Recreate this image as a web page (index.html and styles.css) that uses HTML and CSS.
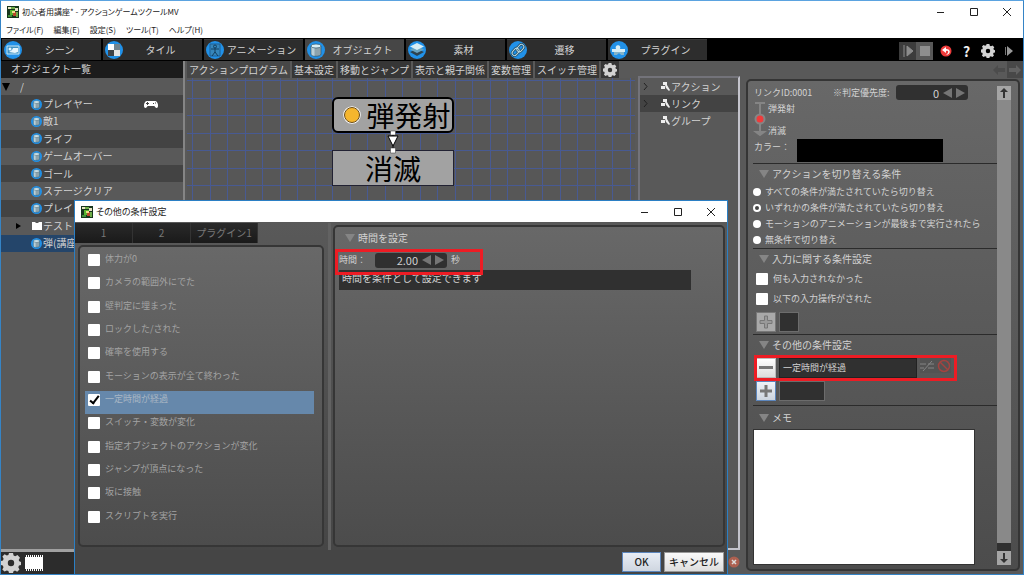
FILE: index.html
```html
<!DOCTYPE html>
<html lang="ja">
<head>
    <meta charset="UTF-8">
    <meta name="viewport" content="width=device-width, initial-scale=1.0">
    <title>初心者用講座* - アクションゲームツクールMV</title>
    <link rel="stylesheet" href="styles.css">
</head>
<body>
    <svg class="defs" aria-hidden="true">
        <symbol id="i-app" viewBox="0 0 12 12">
            <rect width="12" height="12" fill="#17351c"/>
            <path d="M1 1h3v2H1zM8 2h3v3H8z" fill="#e8e3c4"/>
            <path d="M3 4h5v5H3z" fill="#57b52f"/>
            <path d="M6 6h4v4H6z" fill="#b9482a"/>
            <path d="M5 5h3v2H5z" fill="#f0dc8a"/>
            <path d="M1 9h4v2H1z" fill="#3f8f3a"/>
            <path d="M4 1h4v2H4zM9 6h2v5H9z" fill="#6fae4a"/>
        </symbol>
        <symbol id="i-object" viewBox="0 0 18 18">
            <circle cx="9" cy="9" r="9" fill="#2191e8"/>
            <path d="M4 5v8c0 3 10 3 10 0V5z" fill="#8ca3ad" stroke="#35586a" stroke-width=".7"/>
            <path d="M4.500 5.500v7.500c0 1 1 1.500 3 2V6z" fill="#b9d0d9"/>
            <ellipse cx="9" cy="5" rx="5" ry="2" fill="#d8eef5" stroke="#35586a" stroke-width=".7"/>
        </symbol>
        <symbol id="i-gear" viewBox="0 0 20 20">
            <path fill-rule="evenodd" d="M8 0h4l.6 2.6 1.6.7L16.500 2l2.500 2.700-1.300 2.200.6 1.400L20 9v3l-2 .6-.7 1.600 1.200 2.300-2.300 2.200-2.200-1.200-1.500.7L12 20H8l-.6-2-1.600-.6-2.300 1.200-2.200-2.200 1.200-2.200-.7-1.600L0 12V8l2-.6.6-1.600L1.400 3.500l2.200-2.200 2.200 1.200 1.600-.6zM10 6.800a3.200 3.200 0 1 0 0 6.400 3.200 3.200 0 0 0 0-6.400z" fill="currentColor"/>
        </symbol>
        <symbol id="i-min" viewBox="0 0 8 8"><path d="M0 4.500h7" stroke="#222" fill="none"/></symbol>
        <symbol id="i-max" viewBox="0 0 8 8"><path d="M.5.5h7v7h-7z" stroke="#222" fill="none"/></symbol>
        <symbol id="i-close" viewBox="0 0 8 8"><path d="M0 0l8 8M8 0L0 8" stroke="#222" fill="none"/></symbol>
        <symbol id="i-left" viewBox="0 0 9 10"><path d="M9 0v10L0 5z" fill="#757575"/></symbol>
        <symbol id="i-right" viewBox="0 0 9 10"><path d="M0 0v10l9-5z" fill="#757575"/></symbol>
        <symbol id="i-node" viewBox="0 0 9 9">
            <path d="M2 0h4v3H2zM0 4h4v3H0zM4 3h2l3 5-1 1-3-3z" fill="#eee"/>
        </symbol>
    </svg>

    <div class="window">
        <header class="titlebar">
            <svg class="app-icon"><use href="#i-app"/></svg>
            <h1 class="title">初心者用講座* - アクションゲームツクールMV</h1>
            <div class="window-buttons">
                <button aria-label="最小化"><svg><use href="#i-min"/></svg></button>
                <button aria-label="最大化"><svg><use href="#i-max"/></svg></button>
                <button aria-label="閉じる"><svg><use href="#i-close"/></svg></button>
            </div>
        </header>

        <nav class="menubar">
            <button>ファイル(F)</button>
            <button>編集(E)</button>
            <button>設定(S)</button>
            <button>ツール(T)</button>
            <button>ヘルプ(H)</button>
        </nav>

        <div class="toolbar">
            <button class="mode">
                <svg viewBox="0 0 18 18"><circle cx="9" cy="9" r="9" fill="#2191e8"/><path d="M3 5h12v8H3z" fill="#3f92c4" stroke="#c8e6f5"/><circle cx="6" cy="8" r="1.500" fill="#e6f5fc"/><path d="M5 11l3-2 1-2h5v4l-3 1z" fill="#e6f5fc"/></svg>
                <span>シーン</span>
            </button>
            <button class="mode">
                <svg viewBox="0 0 18 18"><circle cx="9" cy="9" r="9" fill="#2191e8"/><path d="M3 3h6v6H3z" fill="#fff"/><path d="M9 3h6v6H9z" fill="#72848f"/><path d="M3 9h6v6H3z" fill="#3d4247"/><path d="M9 9h6v6H9z" fill="#e4e4e4"/></svg>
                <span>タイル</span>
            </button>
            <button class="mode">
                <svg viewBox="0 0 18 18"><circle cx="9" cy="9" r="9" fill="#2191e8"/><path d="M4 3h10v12H4z" fill="#3686bb" stroke="#1d5f94"/><circle cx="9" cy="5.500" r="1.500" fill="none" stroke="#123e5f"/><path d="M5 8h8M9 7v4M9 11l-3 4M9 11l3 4" stroke="#123e5f" fill="none"/></svg>
                <span>アニメーション</span>
            </button>
            <button class="mode active">
                <svg><use href="#i-object"/></svg>
                <span>オブジェクト</span>
            </button>
            <button class="mode">
                <svg viewBox="0 0 18 18"><circle cx="9" cy="9" r="9" fill="#2191e8"/><path d="M9 8l7 3-7 4-7-4z" fill="#2d4350"/><path d="M9 5l7 3.500L9 12 2 8.500z" fill="#6ba4bf"/><path d="M9 2l7 3.500L9 9 2 5.500z" fill="#d7edf5"/></svg>
                <span>素材</span>
            </button>
            <button class="mode">
                <svg viewBox="0 0 18 18"><circle cx="9" cy="9" r="9" fill="#2191e8"/><g fill="none" transform="rotate(-48 9 9)"><rect x="2" y="6" width="8" height="5" rx="2.500" stroke="#21485d" stroke-width="2.500"/><rect x="8" y="7" width="8" height="5" rx="2.500" stroke="#21485d" stroke-width="2.500"/><rect x="2" y="6" width="8" height="5" rx="2.500" stroke="#b5d8e5"/><rect x="8" y="7" width="8" height="5" rx="2.500" stroke="#b5d8e5"/></g></svg>
                <span>遷移</span>
            </button>
            <button class="mode">
                <svg viewBox="0 0 18 18"><circle cx="9" cy="9" r="9" fill="#2191e8"/><path d="M2 8h4c-2-5 6-5 4 0h5v3h-1v3h-3c0-3-4-3-4 0H4v-3H2z" fill="#d7edf5"/><path d="M4 11h10v3h-3c0-2-4-2-4 0H4z" fill="#84b4ca"/></svg>
                <span>プラグイン</span>
            </button>
            <div class="tools">
                <button class="tool lit" aria-label="テストプレイ"><svg viewBox="0 0 18 18"><path d="M5 3v12M8 4v10l6-5z" fill="#8b8b8b" stroke="#8b8b8b"/></svg></button>
                <button class="tool lit stop" aria-label="停止"><svg viewBox="0 0 18 18"><path d="M4 4h10v10H4z" fill="#8e8e8e"/></svg></button>
                <button class="tool" aria-label="元に戻す"><svg viewBox="0 0 18 18"><circle cx="9" cy="9" r="5.500" fill="#ee3b3b"/><path d="M9 5L5 8l4 3V9c3-1 3 2 0 4 5-1 5-6 0-6z" fill="#fff"/></svg></button>
                <button class="tool help" aria-label="ヘルプ">?</button>
                <button class="tool gear" aria-label="設定"><svg><use href="#i-gear"/></svg></button>
                <button class="tool" aria-label="再生"><svg viewBox="0 0 18 18"><path d="M5.500 5v8" stroke="#777"/><path d="M7 4v10l6-5z" fill="#999"/></svg></button>
            </div>
        </div>

        <main class="workspace">
            <aside class="sidebar">
                <h2 class="sidebar-title">オブジェクト一覧</h2>
                <ul class="objects">
                    <li class="root"><svg class="fold" viewBox="0 0 8 8"><path d="M0 0h8L4 8z"/></svg>/</li>
                    <li><svg class="obj"><use href="#i-object"/></svg>プレイヤー
                        <svg class="pad" viewBox="0 0 14 8"><path d="M3 1h8c3 0 4 6 2 7-2 0-2-2-3-2H4C3 6 3 8 1 8-1 7 0 1 3 1z" fill="#fff"/><path d="M2 3.500h3M3.500 2v3M9 3.500h1M11 3h1" stroke="#444"/></svg></li>
                    <li><svg class="obj"><use href="#i-object"/></svg>敵1</li>
                    <li><svg class="obj"><use href="#i-object"/></svg>ライフ</li>
                    <li><svg class="obj"><use href="#i-object"/></svg>ゲームオーバー</li>
                    <li><svg class="obj"><use href="#i-object"/></svg>ゴール</li>
                    <li><svg class="obj"><use href="#i-object"/></svg>ステージクリア</li>
                    <li><svg class="obj"><use href="#i-object"/></svg>プレイ</li>
                    <li class="folder"><svg class="closed" viewBox="0 0 5 6"><path d="M0 0l5 3-5 3z"/></svg><svg class="obj" viewBox="0 0 11 11"><path d="M1 2h3l1 1h2l1-1h3v8H1z" fill="#fff"/></svg>テスト</li>
                    <li class="selected"><svg class="obj"><use href="#i-object"/></svg>弾(講座</li>
                </ul>
                <div class="sidebar-foot">
                    <button aria-label="設定"><svg class="foot-gear"><use href="#i-gear"/></svg></button>
                    <button aria-label="動画"><svg class="film" viewBox="0 0 18 16"><path d="M0 2h18v12H0z" fill="#fff"/><path d="M1 1h17M1 15h17" stroke="#fff" stroke-width="2" stroke-dasharray="1 1"/></svg></button>
                </div>
            </aside>

            <div class="stage">
                <div class="subtabs">
                    <button class="active">アクションプログラム</button>
                    <button>基本設定</button>
                    <button>移動とジャンプ</button>
                    <button>表示と親子関係</button>
                    <button>変数管理</button>
                    <button>スイッチ管理</button>
                    <button class="sub-gear" aria-label="タブ設定"><svg><use href="#i-gear"/></svg></button>
                    <div class="history">
                        <button aria-label="戻る"><svg viewBox="0 0 12 10"><path d="M0 5l5-5v3h7v4H5v3z" fill="#4c4c4c"/></svg></button>
                        <button class="next" aria-label="進む"><svg viewBox="0 0 12 10"><path d="M12 5L7 0v3H0v4h7v3z" fill="#626262"/></svg></button>
                    </div>
                </div>

                <div class="panes">
                    <div class="canvas">
                        <div class="node start"><svg viewBox="0 0 18 18"><circle cx="9" cy="9" r="8" fill="#f5b62e" stroke="#fff" stroke-width="1.500"/><circle cx="9" cy="9" r="7.500" fill="none" stroke="#6b4a10"/></svg>弾発射</div>
                        <svg class="arrow" viewBox="0 0 12 24"><path d="M6 4v16" stroke="#000"/><path d="M3.500 1h5v4h-5zM3.500 18h5v5h-5z" fill="#fff" stroke="#333" stroke-width=".5"/><path d="M1 6h10L6 16z" fill="#fff" stroke="#000"/></svg>
                        <div class="node end">消滅</div>
                    </div>

                    <div class="tree">
                        <ul>
                            <li><svg class="chev" viewBox="0 0 5 7"><path d="M1 0l3 3.500L1 7" fill="none" stroke="#222"/></svg><svg class="kind"><use href="#i-node"/></svg>アクション</li>
                            <li><svg class="chev" viewBox="0 0 5 7"><path d="M1 0l3 3.500L1 7" fill="none" stroke="#222"/></svg><svg class="kind"><use href="#i-node"/></svg>リンク</li>
                            <li><span class="chev"></span><svg class="kind"><use href="#i-node"/></svg>グループ</li>
                        </ul>
                        <button class="delete" aria-label="削除"><svg viewBox="0 0 12 12"><circle cx="6" cy="6" r="5.500" fill="#ad6050"/><path d="M4 4l4 4M8 4L4 8" stroke="#ddd" stroke-width="1.500"/></svg></button>
                    </div>

                    <div class="props">
                        <div class="props-body">
                            <section class="link">
                                <div class="link-row">
                                    <span>リンクID:0001</span>
                                    <label for="priority">※判定優先度:</label>
                                    <div class="spinner">
                                        <input id="priority" type="text" value="0">
                                        <button aria-label="減らす"><svg><use href="#i-left"/></svg></button>
                                        <button aria-label="増やす"><svg><use href="#i-right"/></svg></button>
                                    </div>
                                </div>
                                <div class="route">
                                    <svg viewBox="0 0 14 36"><path d="M2 2h10M7 2v30M3 31h8l-4 3z" stroke="#858585" stroke-width="2" fill="#858585"/><circle cx="7" cy="18" r="4.500" fill="#ee3b3b" stroke="#858585" stroke-width="2"/></svg>
                                    <div><span>弾発射</span><span>消滅</span></div>
                                </div>
                                <div class="color-row">
                                    <label for="color">カラー：</label>
                                    <input id="color" type="color" value="#000000">
                                </div>
                            </section>

                            <section>
                                <h3><i class="tri"></i>アクションを切り替える条件</h3>
                                <label class="radio"><input type="radio" name="cond">すべての条件が満たされていたら切り替え</label>
                                <label class="radio"><input type="radio" name="cond" checked>いずれかの条件が満たされていたら切り替え</label>
                                <label class="radio"><input type="radio" name="cond">モーションのアニメーションが最後まで実行されたら</label>
                                <label class="radio"><input type="radio" name="cond">無条件で切り替え</label>
                            </section>

                            <section>
                                <h3><i class="tri"></i>入力に関する条件設定</h3>
                                <label class="check"><input type="checkbox">何も入力されなかった</label>
                                <label class="check"><input type="checkbox">以下の入力操作がされた</label>
                                <div class="slots">
                                    <button class="square dim" aria-label="入力を追加"><svg viewBox="0 0 14 14"><path d="M5.500 1h3v4.500H13v3H8.500V13h-3V8.500H1v-3h4.500z" fill="#999" stroke="#777"/></svg></button>
                                    <span class="slot small"></span>
                                </div>
                            </section>

                            <section class="others">
                                <h3><i class="tri"></i>その他の条件設定</h3>
                                <div class="slots marked">
                                    <button class="square" aria-label="条件を削除"><svg viewBox="0 0 14 14"><path d="M0 5h14v3H0z" fill="#777"/></svg></button>
                                    <span class="slot wide">一定時間が経過</span>
                                    <div class="flags">
                                        <button aria-label="否定"><svg viewBox="0 0 14 12"><path d="M0 4h6M0 8h4M8 4h6M8 8h6M3 11l9-10" stroke="#858585" fill="none"/></svg></button>
                                        <button aria-label="無効"><svg viewBox="0 0 14 14"><circle cx="7" cy="7" r="5.500" fill="none" stroke="#a34340" stroke-width="1.500"/><path d="M3 3l8 8" stroke="#a34340" stroke-width="1.500"/></svg></button>
                                    </div>
                                </div>
                                <div class="slots">
                                    <button class="square blue" aria-label="条件を追加"><svg viewBox="0 0 14 14"><path d="M5.500 1h3v4.500H13v3H8.500V13h-3V8.500H1v-3h4.500z" fill="#777"/></svg></button>
                                    <span class="slot mid"></span>
                                </div>
                            </section>

                            <section class="memo">
                                <h3><i class="tri"></i><label for="memo">メモ</label></h3>
                                <textarea id="memo"></textarea>
                            </section>
                        </div>
                        <div class="scrollbar">
                            <button aria-label="上へ"><svg viewBox="0 0 10 10"><path d="M5 0l4 4H6v6H4V4H1z" fill="#333"/></svg></button>
                            <div class="track"><div class="thumb"></div></div>
                            <button aria-label="下へ"><svg viewBox="0 0 10 10"><path d="M5 10l4-4H6V0H4v6H1z" fill="#333"/></svg></button>
                        </div>
                    </div>
                </div>
            </div>
        </main>

        <div class="dialog" role="dialog" aria-labelledby="dialog-title">
            <header class="titlebar">
                <svg class="app-icon"><use href="#i-app"/></svg>
                <h2 class="title" id="dialog-title">その他の条件設定</h2>
                <div class="window-buttons">
                    <button aria-label="最小化"><svg><use href="#i-min"/></svg></button>
                    <button aria-label="最大化"><svg><use href="#i-max"/></svg></button>
                    <button aria-label="閉じる"><svg><use href="#i-close"/></svg></button>
                </div>
            </header>
            <div class="dialog-body">
                <div class="choices">
                    <div class="pages">
                        <button>1</button>
                        <button>2</button>
                        <button>プラグイン1</button>
                    </div>
                    <div class="panel conditions">
                        <label><input type="checkbox">体力が0</label>
                        <label><input type="checkbox">カメラの範囲外にでた</label>
                        <label><input type="checkbox">壁判定に埋まった</label>
                        <label><input type="checkbox">ロックした/された</label>
                        <label><input type="checkbox">確率を使用する</label>
                        <label><input type="checkbox">モーションの表示が全て終わった</label>
                        <label class="selected"><input type="checkbox" checked>一定時間が経過</label>
                        <label><input type="checkbox">スイッチ・変数が変化</label>
                        <label><input type="checkbox">指定オブジェクトのアクションが変化</label>
                        <label><input type="checkbox">ジャンプが頂点になった</label>
                        <label><input type="checkbox">坂に接触</label>
                        <label><input type="checkbox">スクリプトを実行</label>
                    </div>
                </div>
                <div class="splitter"></div>
                <div class="panel detail">
                    <h3><i class="tri"></i>時間を設定</h3>
                    <div class="time marked">
                        <label for="seconds">時間：</label>
                        <div class="spinner">
                            <input id="seconds" type="text" value="2.00">
                            <button aria-label="減らす"><svg><use href="#i-left"/></svg></button>
                            <button aria-label="増やす"><svg><use href="#i-right"/></svg></button>
                        </div>
                        <span>秒</span>
                    </div>
                    <p class="hint">時間を条件として設定できます</p>
                </div>
            </div>
            <footer class="dialog-foot">
                <button class="ok">OK</button>
                <button class="cancel">キャンセル</button>
            </footer>
        </div>
    </div>
</body>
</html>
```
FILE: styles.css
```css
*, *::after {
    box-sizing: border-box;
}
body {
    margin: 0;
    font-family: "Noto Sans CJK JP", sans-serif;
    font-size: 10px;
    line-height: 16px;
    color: #d2d2d2;
    background: #595959;
}
h1, h2, h3, p, ul {
    margin: 0;
    padding: 0;
    font-size: 10px;
    font-weight: normal;
    list-style: none;
}
button, input, textarea {
    margin: 0;
    padding: 0;
    border: 0;
    border-radius: 0;
    font: inherit;
    color: inherit;
    background: none;
}
button {
    white-space: nowrap;
}
svg {
    display: block;
    flex: none;
}
.defs {
    position: absolute;
    width: 0;
    height: 0;
}
.window {
    position: relative;
    display: flex;
    flex-direction: column;
    height: 100vh;
    min-height: 500px;
    border: 1px solid #3584c6;
    border-top-color: #5ba3e0;
    overflow: hidden;
}

/* タイトルバーとメニュー */
.titlebar {
    display: flex;
    align-items: center;
    height: 21px;
    padding-left: 6px;
    color: #222;
    background: #fff;
}
.app-icon {
    width: 12px;
    height: 12px;
    margin-right: 3px;
}
.title {
    flex: 1;
    font-size: 8px;
    font-feature-settings: "palt";
}
.window-buttons {
    display: flex;
}
.window-buttons button {
    display: grid;
    place-items: center;
    width: 33px;
    height: 20px;
}
.window-buttons svg {
    width: 8px;
    height: 8px;
}
.menubar {
    display: flex;
    gap: 10px;
    height: 16px;
    padding-left: 5px;
    background: #fff;
    color: #222;
    font-size: 8px;
    font-feature-settings: "palt";
}

/* モード切り替え */
.toolbar {
    display: flex;
    gap: 2px;
    height: 23px;
    padding: 1px 0 1px 1px;
    background: #000;
}
.mode {
    display: flex;
    align-items: center;
    width: 99px;
    padding: 0 4px 0 2px;
    border-top: 1px solid #3d3d3d;
    background: #2d2d2d;
}
.mode.active {
    background: #464646;
}
.mode svg {
    width: 18px;
    height: 18px;
}
.mode span {
    flex: 1;
    text-align: center;
}
.tools {
    display: flex;
    align-items: flex-end;
    margin-left: auto;
    padding-right: 4px;
}
.tool {
    display: grid;
    place-items: center;
    width: 21px;
    height: 18px;
}
.tool svg {
    width: 18px;
    height: 18px;
}
.tool.lit {
    width: 17px;
    background: #3c3c3c;
}
.tool.stop {
    margin-right: 2px;
    background: #585858;
}
.tool.help {
    font-size: 14px;
    font-weight: bold;
    color: #eee;
}
.tool.gear svg {
    width: 14px;
    height: 14px;
}

.workspace {
    display: flex;
    flex: 1;
    min-height: 0;
}

/* オブジェクト一覧 */
.sidebar {
    display: flex;
    flex-direction: column;
    width: 184px;
    border-right: 2px solid #858585;
}
.sidebar-title {
    height: 17px;
    padding-left: 10px;
    background: #1c1c1c;
}
.objects {
    display: grid;
    grid-auto-rows: 1fr;
    height: 174px;
}
.objects li {
    display: flex;
    align-items: center;
    padding-left: 30px;
    white-space: nowrap;
}
.objects li:nth-child(even) {
    background: #434343;
}
.objects .root {
    padding-left: 1px;
}
.fold {
    width: 8px;
    height: 8px;
    margin-right: 10px;
}
.objects .folder {
    padding-left: 15px;
}
.closed {
    width: 5px;
    height: 6px;
    margin-right: 10px;
}
.objects .selected {
    background: #24456a !important;
}
.obj {
    width: 11px;
    height: 11px;
    margin-right: 1px;
}
.pad {
    width: 14px;
    height: 8px;
    margin-left: auto;
    margin-right: 25px;
}
.sidebar-foot {
    display: flex;
    align-items: center;
    gap: 4px;
    height: 25px;
    margin-top: auto;
    border-top: 3px solid #a0a0a0;
    background: #2c2c2c;
}
.foot-gear {
    width: 20px;
    height: 20px;
}
.film {
    width: 18px;
    height: 16px;
}

/* 中央 */
.stage {
    display: flex;
    flex: 1;
    flex-direction: column;
    min-width: 0;
}
.subtabs {
    display: flex;
    gap: 2px;
    height: 17px;
    padding-left: 2px;
}
.subtabs button {
    padding: 0 2px;
    background: #363636;
}
.subtabs .active {
    background: #474747;
}
.sub-gear svg {
    width: 14px;
    height: 14px;
}
.history {
    display: flex;
    margin-left: auto;
}
.subtabs .history button {
    width: 16px;
    background: none;
}
.subtabs .history .next {
    background: #484848;
}
.history svg {
    width: 12px;
    height: 10px;
}
.panes {
    display: flex;
    flex: 1;
    min-height: 0;
}
.canvas {
    position: relative;
    flex: 1;
    margin: 0 3px 0 2px;
    background-color: #575757;
    background-image:
        linear-gradient(90deg, transparent 5px, #485a92 5px, #485a92 6px, transparent 6px, transparent 23px, #485a92 23px, #485a92 24px, transparent 24px),
        linear-gradient(transparent 2px, #485a92 2px, #485a92 3px, transparent 3px, transparent 20px, #485a92 20px, #485a92 21px, transparent 21px);
    background-size: 35px 35px;
}
.node {
    position: absolute;
    left: 145px;
    display: flex;
    align-items: center;
    justify-content: center;
    gap: 5px;
    width: 122px;
    height: 36px;
    border: 1px solid #223;
    background: #a2a2a2;
    color: #000;
    font-size: 28px;
    line-height: 34px;
    white-space: nowrap;
}
.node.start {
    top: 19px;
    padding-left: 8px;
    border: 2px solid #000;
    border-radius: 6px;
}
.node.end {
    top: 72px;
}
.node svg {
    width: 18px;
    height: 18px;
}
.arrow {
    position: absolute;
    z-index: 1;
    top: 52px;
    left: 200px;
    width: 12px;
    height: 24px;
}

/* アクション / リンク / グループ */
.tree {
    position: relative;
    width: 102px;
    margin: -2px 0 24px;
    border: 2px solid #73737a;
    border-right-color: #c4c4cc;
    border-bottom-color: #c4c4cc;
}
.tree li {
    display: flex;
    align-items: center;
    height: 17px;
    padding-left: 3px;
}
.tree li:nth-child(even) {
    background: #434343;
}
.chev {
    width: 5px;
    height: 7px;
    margin-right: 13px;
}
.kind {
    width: 9px;
    height: 9px;
    margin-right: 1px;
}
.delete {
    position: absolute;
    right: -2px;
    bottom: -20px;
}
.delete svg {
    width: 12px;
    height: 12px;
}

/* プロパティ */
.props {
    display: flex;
    width: 274px;
    margin: 1px 3px 3px 6px;
    padding: 4px 7px 4px 5px;
    border: 2px solid #353535;
    border-radius: 5px;
    background: linear-gradient(#686868, #4c4c4c);
    font-size: 9px;
}
.props-body {
    display: flex;
    flex: 1;
    flex-direction: column;
    min-width: 0;
    white-space: nowrap;
}
.props section {
    border-bottom: 1px solid #2b2b2b;
}
.props .link {
    height: 79px;
}
.props .others {
    padding-bottom: 2px;
}
h3 {
    display: flex;
    align-items: center;
    height: 20px;
    padding-left: 6px;
}
.tri {
    width: 10px;
    height: 8px;
    margin-right: 3px;
    background: #858585;
    clip-path: polygon(0 0, 100% 0, 50% 100%);
}
.link-row {
    display: grid;
    grid-template-columns: 79px 63px 72px;
    padding-left: 1px;
}
.spinner {
    display: flex;
    align-items: center;
    gap: 4px;
    width: 72px;
    height: 15px;
    padding-right: 3px;
    border-radius: 3px;
    background: #303030;
}
.spinner input {
    flex: 1;
    width: 0;
    font-size: 11px;
    text-align: right;
}
.spinner svg {
    width: 9px;
    height: 10px;
}
.route {
    display: flex;
    height: 38px;
}
.route svg {
    width: 14px;
    height: 36px;
}
.route span {
    display: block;
    height: 22px;
    padding-left: 1px;
}
.color-row {
    display: grid;
    grid-template-columns: 43px 146px;
    padding-left: 1px;
}
.color-row input {
    width: 146px;
    height: 23px;
    appearance: none;
}
.color-row input::-webkit-color-swatch-wrapper {
    padding: 0;
}
.color-row input::-webkit-color-swatch {
    border: 0;
}
.radio, .check {
    display: flex;
    align-items: center;
    height: 16px;
}
.radio input {
    flex: none;
    width: 8px;
    height: 8px;
    margin-right: 4px;
    border-radius: 50%;
    background: #fff;
    appearance: none;
}
.radio input:checked {
    border: 2px solid #fff;
    background: #444;
}
.check {
    height: 20px;
    padding-left: 3px;
}
input[type="checkbox"] {
    flex: none;
    width: 12px;
    height: 12px;
    margin-right: 5px;
    border-radius: 1px;
    background: #fff;
    appearance: none;
}
.slots {
    display: flex;
    gap: 3px;
    height: 20px;
    margin: 3px 0 2px;
    padding-left: 3px;
}
.square {
    display: grid;
    place-items: center;
    width: 20px;
    height: 20px;
    border: 1px solid #bbb;
    background: linear-gradient(#fff, #ddd);
}
.square.dim {
    border-color: #777;
    background: #a9a9a9;
}
.square.blue {
    border-color: #5c86bd;
    background: linear-gradient(#eef2f8, #ccd4de);
}
.square svg {
    width: 14px;
    height: 14px;
}
.slot {
    padding-left: 3px;
    border: 1px solid #6c6c6c;
    background: #303030;
    line-height: 18px;
}
.slot.small {
    width: 20px;
}
.slot.mid {
    width: 46px;
}
.slot.wide {
    width: 138px;
    border-color: #222;
}
.flags {
    display: flex;
    gap: 3px;
    height: 15px;
    background: #535353;
}
.flags svg {
    width: 14px;
    height: 14px;
}
.marked {
    position: relative;
}
.marked::after {
    content: "";
    position: absolute;
    inset: -3px 40px -3px 1px;
    border: 3px solid #ed1c24;
    pointer-events: none;
}
.props .memo {
    display: flex;
    flex: 1;
    flex-direction: column;
    padding-top: 2px;
    border: 0;
}
.memo textarea {
    flex: 1;
    width: 222px;
    margin-top: 1px;
    border: 1px solid #333;
    background: #fff;
    color: #222;
    resize: none;
}
.scrollbar {
    display: flex;
    flex-direction: column;
    width: 14px;
    margin-top: 1px;
}
.scrollbar button {
    display: grid;
    place-items: center;
    height: 14px;
    background: #a5a5a5;
}
.scrollbar svg {
    width: 10px;
    height: 10px;
}
.track {
    flex: 1;
    padding-bottom: 8px;
    background: #303030;
}
.thumb {
    height: 100%;
    background: #898989;
}

/* 条件設定ダイアログ */
.dialog {
    position: absolute;
    top: 199px;
    right: 295px;
    bottom: 0;
    left: 73px;
    z-index: 2;
    display: flex;
    flex-direction: column;
    border: 1px solid #2b7fc4;
    border-bottom: 0;
    background: #454545;
}
.dialog .title {
    font-size: 9px;
}
.dialog-body {
    display: flex;
    flex: 1;
    min-height: 0;
    padding-top: 1px;
    background: linear-gradient(#595959, #464646);
}
.choices {
    display: flex;
    flex-direction: column;
    width: 249px;
}
.pages {
    display: flex;
    height: 20px;
    color: #777;
}
.pages button {
    width: 58px;
    border-right: 1px solid #333;
    background: linear-gradient(#2a2a2a, #1a1a1a);
}
.pages button:last-child {
    width: 67px;
}
.panel {
    border: 2px solid #363636;
    border-radius: 5px;
    background: linear-gradient(#686868, #4c4c4c);
}
.conditions {
    display: grid;
    flex: 1;
    grid-auto-rows: 1fr;
    margin: 2px 0 3px 3px;
    padding: 4px 8px 14px 5px;
    color: #a3a3a3;
    font-size: 9px;
}
.conditions label {
    display: flex;
    padding: 0 3px;
}
.conditions input {
    margin-top: 3px;
}
.conditions .selected {
    background: #6688ab;
    color: #a9b7c4;
}
.conditions input:checked {
    position: relative;
}
.conditions input:checked::after {
    content: "";
    position: absolute;
    top: 0;
    left: 4px;
    width: 5px;
    height: 10px;
    border: solid #000;
    border-width: 0 2px 2px 0;
    transform: rotate(38deg);
}
.splitter {
    width: 3px;
    margin: 0 2px 0 4px;
    background: #626262;
}
.detail {
    flex: 1;
    margin: 2px 2px 3px 0;
    padding: 1px 4px;
}
.time {
    display: grid;
    grid-template-columns: 36px 72px 1fr;
    align-items: center;
    height: 20px;
    margin-top: 2px;
    font-size: 9px;
}
.time span {
    padding-left: 4px;
}
.time.marked::after {
    inset: -1px auto -5px -4px;
    width: 148px;
}
.hint {
    width: 352px;
    max-width: 100%;
    height: 20px;
    padding-left: 3px;
    background: #303030;
}
.dialog-foot {
    display: flex;
    justify-content: flex-end;
    gap: 3px;
    height: 24px;
    padding: 2px 3px 2px;
}
.dialog-foot button {
    height: 20px;
    border: 1px solid #999;
    background: linear-gradient(#fafafa, #dedede);
    color: #222;
    font-weight: 500;
}
.dialog-foot .ok {
    width: 39px;
    border-color: #5c86bd;
    background: linear-gradient(#e8edf5, #cfd6e0);
}
.dialog-foot .cancel {
    width: 60px;
}
```
